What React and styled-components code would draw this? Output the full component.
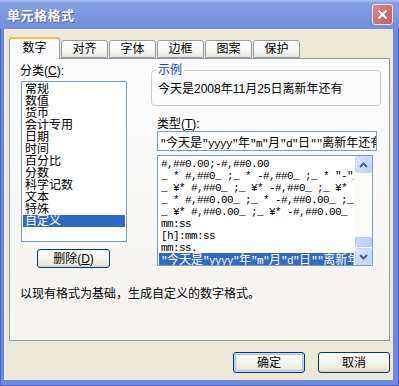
import React from "react";
import styled, { createGlobalStyle } from "styled-components";

const Global = createGlobalStyle`
  html, body { margin: 0; padding: 0; background: #fff; }
  body {
    font-family: "Liberation Sans", "Noto Sans CJK SC", sans-serif;
    font-size: 12px;
    color: #000;
  }
  * { box-sizing: border-box; }
`;

const categories = [
  "常规", "数值", "货币", "会计专用", "日期", "时间",
  "百分比", "分数", "科学记数", "文本", "特殊", "自定义",
];

const formats = [
  "#,##0.00;-#,##0.00",
  '_ * #,##0_ ;_ * -#,##0_ ;_ * "-"_ ;_ @_ ',
  '_ ¥* #,##0_ ;_ ¥* -#,##0_ ;_ ¥* "-"_ ;_ @_ ',
  '_ * #,##0.00_ ;_ * -#,##0.00_ ;_ * "-"??_ ;_ @_ ',
  '_ ¥* #,##0.00_ ;_ ¥* -#,##0.00_ ;_ ¥* "-"??_ ;_ @_ ',
  "mm:ss",
  "[h]:mm:ss",
  "mm:ss.",
  '"今天是"yyyy"年"m"月"d"日""离新年还有"',
];

const tabs = ["数字", "对齐", "字体", "边框", "图案", "保护"];

const Window = styled.div`
  width: 399px;
  height: 386px;
  background: #7089dc;
  box-shadow: inset 1px 0 #4e66c4, inset -1px 0 #4e66c4, inset 0 -1px #4e66c4;
  display: flex;
  flex-direction: column;
  overflow: hidden;
`;

const TitleBar = styled.div`
  height: 29px;
  flex: none;
  display: flex;
  align-items: center;
  justify-content: space-between;
  padding: 0 6px 0 7px;
  background: linear-gradient(#a9bcf0 0, #84a0e4 3px, #7b96de 55%, #728ed9 100%);
`;

const Title = styled.div`
  color: #fff;
  font-family: "Noto Sans CJK SC", sans-serif;
  font-weight: 700;
  font-size: 13px;
  text-shadow: 1px 1px #5066b8;
  letter-spacing: 0.5px;
`;

const CloseButton = styled.div`
  width: 21px;
  height: 21px;
  border-radius: 3px;
  border: 1px solid #eadfe3;
  background: linear-gradient(135deg, #d68a86, #c0605c);
  display: flex;
  align-items: center;
  justify-content: center;
`;

const Client = styled.div`
  flex: 1;
  margin: 0 6px 6px 4px;
  background: #ece9d8;
  padding: 8px 3px 0 5px;
  display: flex;
  flex-direction: column;
`;

const TabStrip = styled.div`
  display: flex;
  align-items: flex-end;
  gap: 1px;
  height: 22px;
  margin-bottom: -1px;
  position: relative;
  z-index: 1;
`;

const Tab = styled.div`
  width: ${(p) => (p.$active ? 51 : 47)}px;
  height: ${(p) => (p.$active ? 22 : 18)}px;
  margin-bottom: ${(p) => (p.$active ? 0 : 1)}px;
  border: 1px solid #919b9c;
  border-bottom: ${(p) => (p.$active ? "none" : "1px solid #919b9c")};
  border-top: ${(p) => (p.$active ? "2px solid #f3c14a" : "1px solid #919b9c")};
  border-radius: 3px 3px 0 0;
  background: ${(p) =>
    p.$active ? "#fcfcfe" : "linear-gradient(#ffffff, #f3f3ef 70%, #e6e5df)"};
  display: flex;
  align-items: center;
  justify-content: center;
  font-size: 12px;
  line-height: 12px;
  padding-bottom: ${(p) => (p.$active ? 2 : 0)}px;
`;

const Panel = styled.div`
  height: 283px;
  border: 1px solid #919b9c;
  background: linear-gradient(#fcfcfe, #f4f3ee);
  padding: 5px 9px 0 10px;
  display: grid;
  grid-template-columns: 107px 1fr;
  column-gap: 24px;
  align-content: start;
`;

const Column = styled.div`
  display: flex;
  flex-direction: column;
  align-items: flex-start;
`;

const Label = styled.div`
  line-height: ${(p) => p.$lh || 14}px;
  margin-top: ${(p) => p.$mt || 0}px;
  margin-left: ${(p) => p.$ml || 0}px;
  white-space: nowrap;
`;

const ListBox = styled.div`
  width: ${(p) => p.$w}px;
  height: ${(p) => p.$h}px;
  margin-top: ${(p) => p.$mt}px;
  margin-left: ${(p) => p.$ml}px;
  border: 1px solid #7f9db9;
  background: #fff;
  padding-top: 1px;
  display: flex;
  overflow: hidden;
`;

const Items = styled.div`
  flex: 1;
  min-width: 0;
  overflow: hidden;
`;

const Item = styled.div`
  height: 12px;
  line-height: 12px;
  margin: 0 1px;
  padding-left: 2px;
  white-space: nowrap;
  overflow: hidden;
  background: ${(p) => (p.$selected ? "#316ac5" : "transparent")};
  color: ${(p) => (p.$selected ? "#fff" : "#000")};
`;

const Mono = styled.span`
  font-family: "Liberation Mono", monospace;
  font-size: 11px;
  letter-spacing: -0.6px;
`;

const Cjk = styled.span`
  font-family: "Noto Sans CJK SC", sans-serif;
  font-size: 12px;
`;

const Mixed = ({ text }) =>
  text.split(/([\u4e00-\u9fff]+)/).map((part, i) =>
    /[\u4e00-\u9fff]/.test(part) ? (
      <Cjk key={i}>{part}</Cjk>
    ) : (
      <Mono key={i}>{part}</Mono>
    )
  );

const Button = styled.div`
  width: ${(p) => p.$w || 72}px;
  height: ${(p) => p.$h || 21}px;
  margin-top: ${(p) => p.$mt || 0}px;
  margin-left: ${(p) => p.$ml || 0}px;
  border: 1px solid #003c74;
  border-radius: 3px;
  background: linear-gradient(#ffffff, #f4f3ee 45%, #ece9d8 85%, #d6d0c5);
  box-shadow: ${(p) =>
    p.$default ? "inset 0 0 0 1px #c6dafc, inset 0 0 0 2px #a8c4f4" : "none"};
  display: flex;
  align-items: center;
  justify-content: center;
  font-size: 12px;
  line-height: 12px;
`;

const GroupBox = styled.div`
  position: relative;
  width: 230px;
  height: 36px;
  margin-top: 6px;
  border: 1px solid #d0d0bf;
  border-radius: 4px;
  padding: 11px 6px 0 6px;
  line-height: 14px;
  white-space: nowrap;
`;

const Legend = styled.span`
  position: absolute;
  top: -7px;
  left: 4px;
  padding: 0 2px;
  line-height: 12px;
  color: #0046d5;
  background: #fbfbfa;
`;

const Sample = styled.span`
  font-size: 12px;
`;

const TextBox = styled.div`
  width: 220px;
  height: 20px;
  margin-left: 6px;
  border: 1px solid #7f9db9;
  background: #fff;
  padding: 3px 2px 0 2px;
  line-height: 13px;
  white-space: nowrap;
  overflow: hidden;
`;

const ScrollBar = styled.div`
  width: 17px;
  flex: none;
  display: flex;
  flex-direction: column;
  background: #fbfbf8;
  margin-top: -1px;
`;

const ScrollButton = styled.div`
  width: 17px;
  height: 17px;
  flex: none;
  border: 1px solid #c3d3fd;
  border-radius: 2px;
  background: linear-gradient(135deg, #dce7fe, #bccffb);
  display: flex;
  align-items: center;
  justify-content: center;
`;

const Track = styled.div`
  flex: 1;
  display: flex;
  flex-direction: column;
  justify-content: flex-end;
`;

const Thumb = styled.div`
  height: 10px;
  margin-bottom: 1px;
  border: 1px solid #b5c8f3;
  border-radius: 2px;
  background: linear-gradient(90deg, #cad8fc, #bccffb);
`;

const Note = styled.div`
  grid-column: 1 / -1;
  margin-top: 19px;
  line-height: 14px;
`;

const Footer = styled.div`
  display: flex;
  justify-content: flex-end;
  gap: 13px;
  margin-top: 11px;
`;

const Arrow = ({ up }) => (
  <svg width="9" height="6" viewBox="0 0 9 6">
    <path
      d={up ? "M1 5 L4.5 1.5 L8 5" : "M1 1 L4.5 4.5 L8 1"}
      fill="none"
      stroke="#4d6185"
      strokeWidth="2"
    />
  </svg>
);

export default function App() {
  return (
    <>
      <Global />
      <Window>
        <TitleBar>
          <Title>单元格格式</Title>
          <CloseButton>
            <svg width="11" height="11" viewBox="0 0 11 11">
              <path d="M1.5 1.5 L9.5 9.5 M9.5 1.5 L1.5 9.5" stroke="#fff" strokeWidth="2" />
            </svg>
          </CloseButton>
        </TitleBar>
        <Client>
          <TabStrip>
            {tabs.map((t, i) => (
              <Tab key={t} $active={i === 0}>
                {t}
              </Tab>
            ))}
          </TabStrip>
          <Panel>
            <Column>
              <Label>
                分类(<u>C</u>):
              </Label>
              <ListBox $w={106} $h={161} $mt={3} $ml={1}>
                <Items>
                  {categories.map((c, i) => (
                    <Item key={c} $selected={i === categories.length - 1}>
                      {c}
                    </Item>
                  ))}
                </Items>
              </ListBox>
              <Button $w={73} $h={19} $mt={7} $ml={17}>
                删除(<u>D</u>)
              </Button>
            </Column>
            <Column>
              <GroupBox>
                <Legend>示例</Legend>
                <Sample>今天是2008年11月25日离新年还有</Sample>
              </GroupBox>
              <Label $mt={12} $lh={13} $ml={6}>
                类型(<u>T</u>):
              </Label>
              <TextBox>
                <Mixed text={formats[formats.length - 1]} />
              </TextBox>
              <ListBox $w={216} $h={111} $mt={4} $ml={6}>
                <Items>
                  {formats.map((f, i) => (
                    <Item key={f} $selected={i === formats.length - 1}>
                      <Mixed text={f} />
                    </Item>
                  ))}
                </Items>
                <ScrollBar>
                  <ScrollButton>
                    <Arrow up />
                  </ScrollButton>
                  <Track>
                    <Thumb />
                  </Track>
                  <ScrollButton>
                    <Arrow />
                  </ScrollButton>
                </ScrollBar>
              </ListBox>
            </Column>
            <Note>以现有格式为基础，生成自定义的数字格式。</Note>
          </Panel>
          <Footer>
            <Button $default>确定</Button>
            <Button>取消</Button>
          </Footer>
        </Client>
      </Window>
    </>
  );
}
